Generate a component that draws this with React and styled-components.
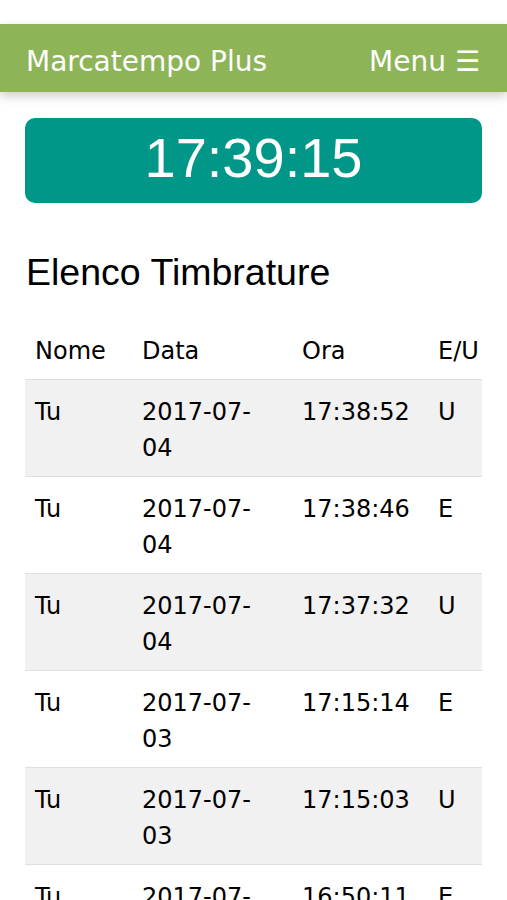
import styled, { createGlobalStyle } from "styled-components";

const timbrature = [
  { nome: "Tu", data: "2017-07-04", ora: "17:38:52", tipo: "U" },
  { nome: "Tu", data: "2017-07-04", ora: "17:38:46", tipo: "E" },
  { nome: "Tu", data: "2017-07-04", ora: "17:37:32", tipo: "U" },
  { nome: "Tu", data: "2017-07-03", ora: "17:15:14", tipo: "E" },
  { nome: "Tu", data: "2017-07-03", ora: "17:15:03", tipo: "U" },
  { nome: "Tu", data: "2017-07-03", ora: "16:50:11", tipo: "E" },
];

const App = () => {
  return (
    <>
      <GlobalStyle />
      <Navbar>
        <Brand>Marcatempo Plus</Brand>
        <MenuButton>Menu ☰</MenuButton>
      </Navbar>
      <Content>
        <Clock>17:39:15</Clock>
        <Title>Elenco Timbrature</Title>
        <Table>
          <colgroup>
            <col style={{ width: 107 }} />
            <col style={{ width: 160 }} />
            <col style={{ width: 136 }} />
            <col style={{ width: 54 }} />
          </colgroup>
          <thead>
            <Row>
              <Cell as="th">Nome</Cell>
              <Cell as="th">Data</Cell>
              <Cell as="th">Ora</Cell>
              <Cell as="th">E/U</Cell>
            </Row>
          </thead>
          <tbody>
            {timbrature.map((t, i) => (
              <Row key={i} $striped={i % 2 === 0}>
                <Cell>{t.nome}</Cell>
                <DateCell>{t.data}</DateCell>
                <Cell>{t.ora}</Cell>
                <Cell>{t.tipo}</Cell>
              </Row>
            ))}
          </tbody>
        </Table>
      </Content>
    </>
  );
};

export default App;

const GlobalStyle = createGlobalStyle`
  body {
    margin: 0;
    background: #fff;
    font-family: "DejaVu Sans", Verdana, sans-serif;
    color: #000;
  }
`;

const Navbar = styled.nav`
  display: flex;
  align-items: center;
  justify-content: space-between;
  height: 68px;
  box-sizing: border-box;
  margin-top: 24px;
  padding: 6px 27px 0 26px;
  background-color: #8db457;
  color: #fff;
  font-size: 28px;
  box-shadow: 0 4px 10px rgba(0, 0, 0, 0.2);
`;

const Brand = styled.span`
  white-space: nowrap;
`;

const MenuButton = styled.span`
  white-space: nowrap;
`;

const Content = styled.main`
  display: flex;
  flex-direction: column;
  padding: 26px 25px 0;
`;

const Clock = styled.div`
  background-color: #009688;
  color: #fff;
  border-radius: 10px;
  text-align: center;
  font-family: "Liberation Sans", Arial, sans-serif;
  font-size: 56px;
  line-height: 64px;
  padding: 8px 0 13px;
`;

const Title = styled.h2`
  margin: 49px 0 27px 1px;
  font-family: "Liberation Sans", Arial, sans-serif;
  font-weight: normal;
  font-size: 37.5px;
  line-height: 40px;
`;

const Table = styled.table`
  width: 100%;
  table-layout: fixed;
  border-collapse: collapse;
  font-size: 24px;
  line-height: 36px;
`;

const Row = styled.tr`
  border-bottom: 1px solid #e0e0e0;
  background-color: ${({ $striped }) => ($striped ? "#f1f1f1" : "#fff")};
`;

const Cell = styled.td`
  padding: 14px 0 10px 10px;
  text-align: left;
  vertical-align: top;
  font-weight: normal;
  white-space: nowrap;
`;

const DateCell = styled(Cell)`
  white-space: normal;
  overflow-wrap: anywhere;
  padding-right: 35px;
`;
